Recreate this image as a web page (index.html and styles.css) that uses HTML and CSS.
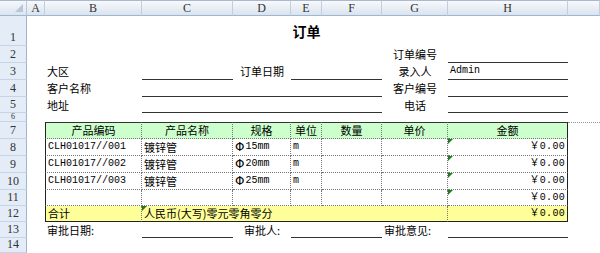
FILE: index.html
```html
<!DOCTYPE html>
<html lang="zh-CN">
<head>
<meta charset="utf-8">
<title>订单</title>
<link rel="stylesheet" href="styles.css">
</head>
<body>
<div class="sheet">
  <div class="corner"></div>
  <div class="ch">A</div><div class="ch">B</div><div class="ch">C</div><div class="ch">D</div><div class="ch">E</div><div class="ch">F</div><div class="ch">G</div><div class="ch">H</div><div class="ch"></div>

  <div class="rh">1</div><div></div><div class="title span7">订单</div><div></div>

  <div class="rh">2</div><div></div><div></div><div></div><div></div><div></div><div></div><div class="c ctr">订单编号</div><div class="ul"></div><div></div>

  <div class="rh">3</div><div></div><div class="c">大区</div><div class="ul"></div><div class="c ctr">订单日期</div><div class="ul span2"></div><div class="c ctr">录入人</div><div class="ul c m">Admin</div><div></div>

  <div class="rh">4</div><div></div><div class="c">客户名称</div><div class="ul span4"></div><div class="c ctr">客户编号</div><div class="ul"></div><div></div>

  <div class="rh">5</div><div></div><div class="c">地址</div><div class="ul span4"></div><div class="c ctr">电话</div><div class="ul"></div><div></div>

  <div class="rh rh-small">6</div><div class="span9"></div>

  <div class="rh">7</div><div></div>
  <div class="t th tl tt ctr">产品编码</div><div class="t th tt ctr">产品名称</div><div class="t th tt ctr">规格</div><div class="t th tt ctr">单位</div><div class="t th tt ctr">数量</div><div class="t th tt ctr">单价</div><div class="t th tt tr ctr">金额</div><div class="ext"></div>

  <div class="rh">8</div><div></div>
  <div class="t tl c m">CLH01017//001</div><div class="t c">镀锌管</div><div class="t c"><span class="phi">Φ</span><span class="m">15mm</span></div><div class="t c m">m</div><div class="t"></div><div class="t"></div><div class="t tr c r m amt err">￥0.00</div><div></div>

  <div class="rh">9</div><div></div>
  <div class="t tl c m">CLH01017//002</div><div class="t c">镀锌管</div><div class="t c"><span class="phi">Φ</span><span class="m">20mm</span></div><div class="t c m">m</div><div class="t"></div><div class="t"></div><div class="t tr c r m amt err">￥0.00</div><div></div>

  <div class="rh">10</div><div></div>
  <div class="t tl c m">CLH01017//003</div><div class="t c">镀锌管</div><div class="t c"><span class="phi">Φ</span><span class="m">25mm</span></div><div class="t c m">m</div><div class="t"></div><div class="t"></div><div class="t tr c r m amt err">￥0.00</div><div></div>

  <div class="rh">11</div><div></div>
  <div class="t tl"></div><div class="t"></div><div class="t"></div><div class="t"></div><div class="t"></div><div class="t"></div><div class="t tr c r m amt err">￥0.00</div><div></div>

  <div class="rh">12</div><div></div>
  <div class="t tl tb tot c">合计</div><div class="t tb tot c span5 err">人民币(大写)零元零角零分</div><div class="t tb tr tot c r m amt">￥0.00</div><div></div>

  <div class="rh">13</div><div></div><div class="c">审批日期:</div><div class="ul"></div><div class="c ctr">审批人:</div><div class="ul span2"></div><div class="c">审批意见:</div><div class="ul"></div><div></div>

  <div class="rh">14</div><div class="span9"></div>
</div>
</body>
</html>
```
FILE: styles.css
```css
* {
  box-sizing: border-box;
  margin: 0;
  padding: 0;
}

html, body {
  background: #fff;
}

body {
  margin: 0;
  width: 600px;
  height: 253px;
  overflow: hidden;
  font-family: "Noto Sans CJK SC", sans-serif;
  font-size: 11px;
  color: #000;
}

.sheet {
  display: grid;
  grid-template-columns: 27px 18px 97px 91px 58px 31px 60px 66px 120px 32px;
  grid-template-rows: 16px 30px 17px 17px 17px 16px 9px 17px 17px 17px 17px 16px 16px 16px 15px;
  width: 600px;
  height: 253px;
}

.sheet > div {
  display: flex;
  align-items: center;
  white-space: nowrap;
  overflow: hidden;
  line-height: 1;
  min-width: 0;
}

/* headers */
.corner {
  position: relative;
  background: linear-gradient(#f5f8fc, #dbe4ef);
  border-right: 1px solid #b9c7da;
  border-bottom: 1px solid #9eb6ce;
  border-top: 1px solid #a9bad0;
}

.corner::after {
  content: "";
  position: absolute;
  right: 3px;
  bottom: 3px;
  border-left: 8px solid transparent;
  border-bottom: 8px solid #b8c6d8;
}

.ch {
  justify-content: center;
  background: linear-gradient(#f7f9fc, #dae3ee);
  border-right: 1px solid #c2cede;
  border-bottom: 1px solid #9eb6ce;
  border-top: 1px solid #a9bad0;
  font-family: "Liberation Serif", "DejaVu Serif", serif;
  font-size: 12px;
  color: #333;
}

.rh {
  justify-content: center;
  align-items: flex-end !important;
  padding-bottom: 2px;
  background: #e4ecf7;
  border-right: 1px solid #9eb6ce;
  border-bottom: 1px solid #c7d4e5;
  font-family: "Liberation Serif", "DejaVu Serif", serif;
  font-size: 12px;
  color: #333;
}

.rh-small {
  padding-bottom: 0;
  font-size: 8px;
  line-height: 8px !important;
}

/* generic cells */
.c {
  padding: 0 2px;
}

.ctr {
  justify-content: center;
}

.r {
  justify-content: flex-end;
}

.m {
  font-family: "Liberation Mono", "Noto Sans CJK SC", monospace;
  font-size: 10px;
}

.phi {
  font-family: "DejaVu Sans", sans-serif;
  font-size: 12px;
  margin-right: 1px;
}

.amt {
  letter-spacing: 0.3px;
  padding-right: 2px;
}

.title {
  justify-content: center;
  font-size: 14px;
  font-weight: bold;
}

.ul {
  border-bottom: 1px solid #333;
}

.span2 { grid-column: span 2; }
.span4 { grid-column: span 4; }
.span5 { grid-column: span 5; }
.span7 { grid-column: span 7; }
.span9 { grid-column: span 9; }

/* table */
.t {
  border-right: 1px dotted #777;
  border-bottom: 1px dotted #777;
}

.tl { border-left: 1px solid #222; }
.tr { border-right: 1px solid #222; }
.tt { border-top: 1px solid #333; }
.tb { border-bottom: 1px solid #222; }

.th {
  background: #ccffcc;
}

.tot {
  background: #ffff99;
}

.ext {
  border-top: 1px dotted #999;
}

.err {
  position: relative;
}

.err::before {
  content: "";
  position: absolute;
  left: 0;
  top: 0;
  border-top: 5px solid #1f7a1f;
  border-right: 5px solid transparent;
}
```
